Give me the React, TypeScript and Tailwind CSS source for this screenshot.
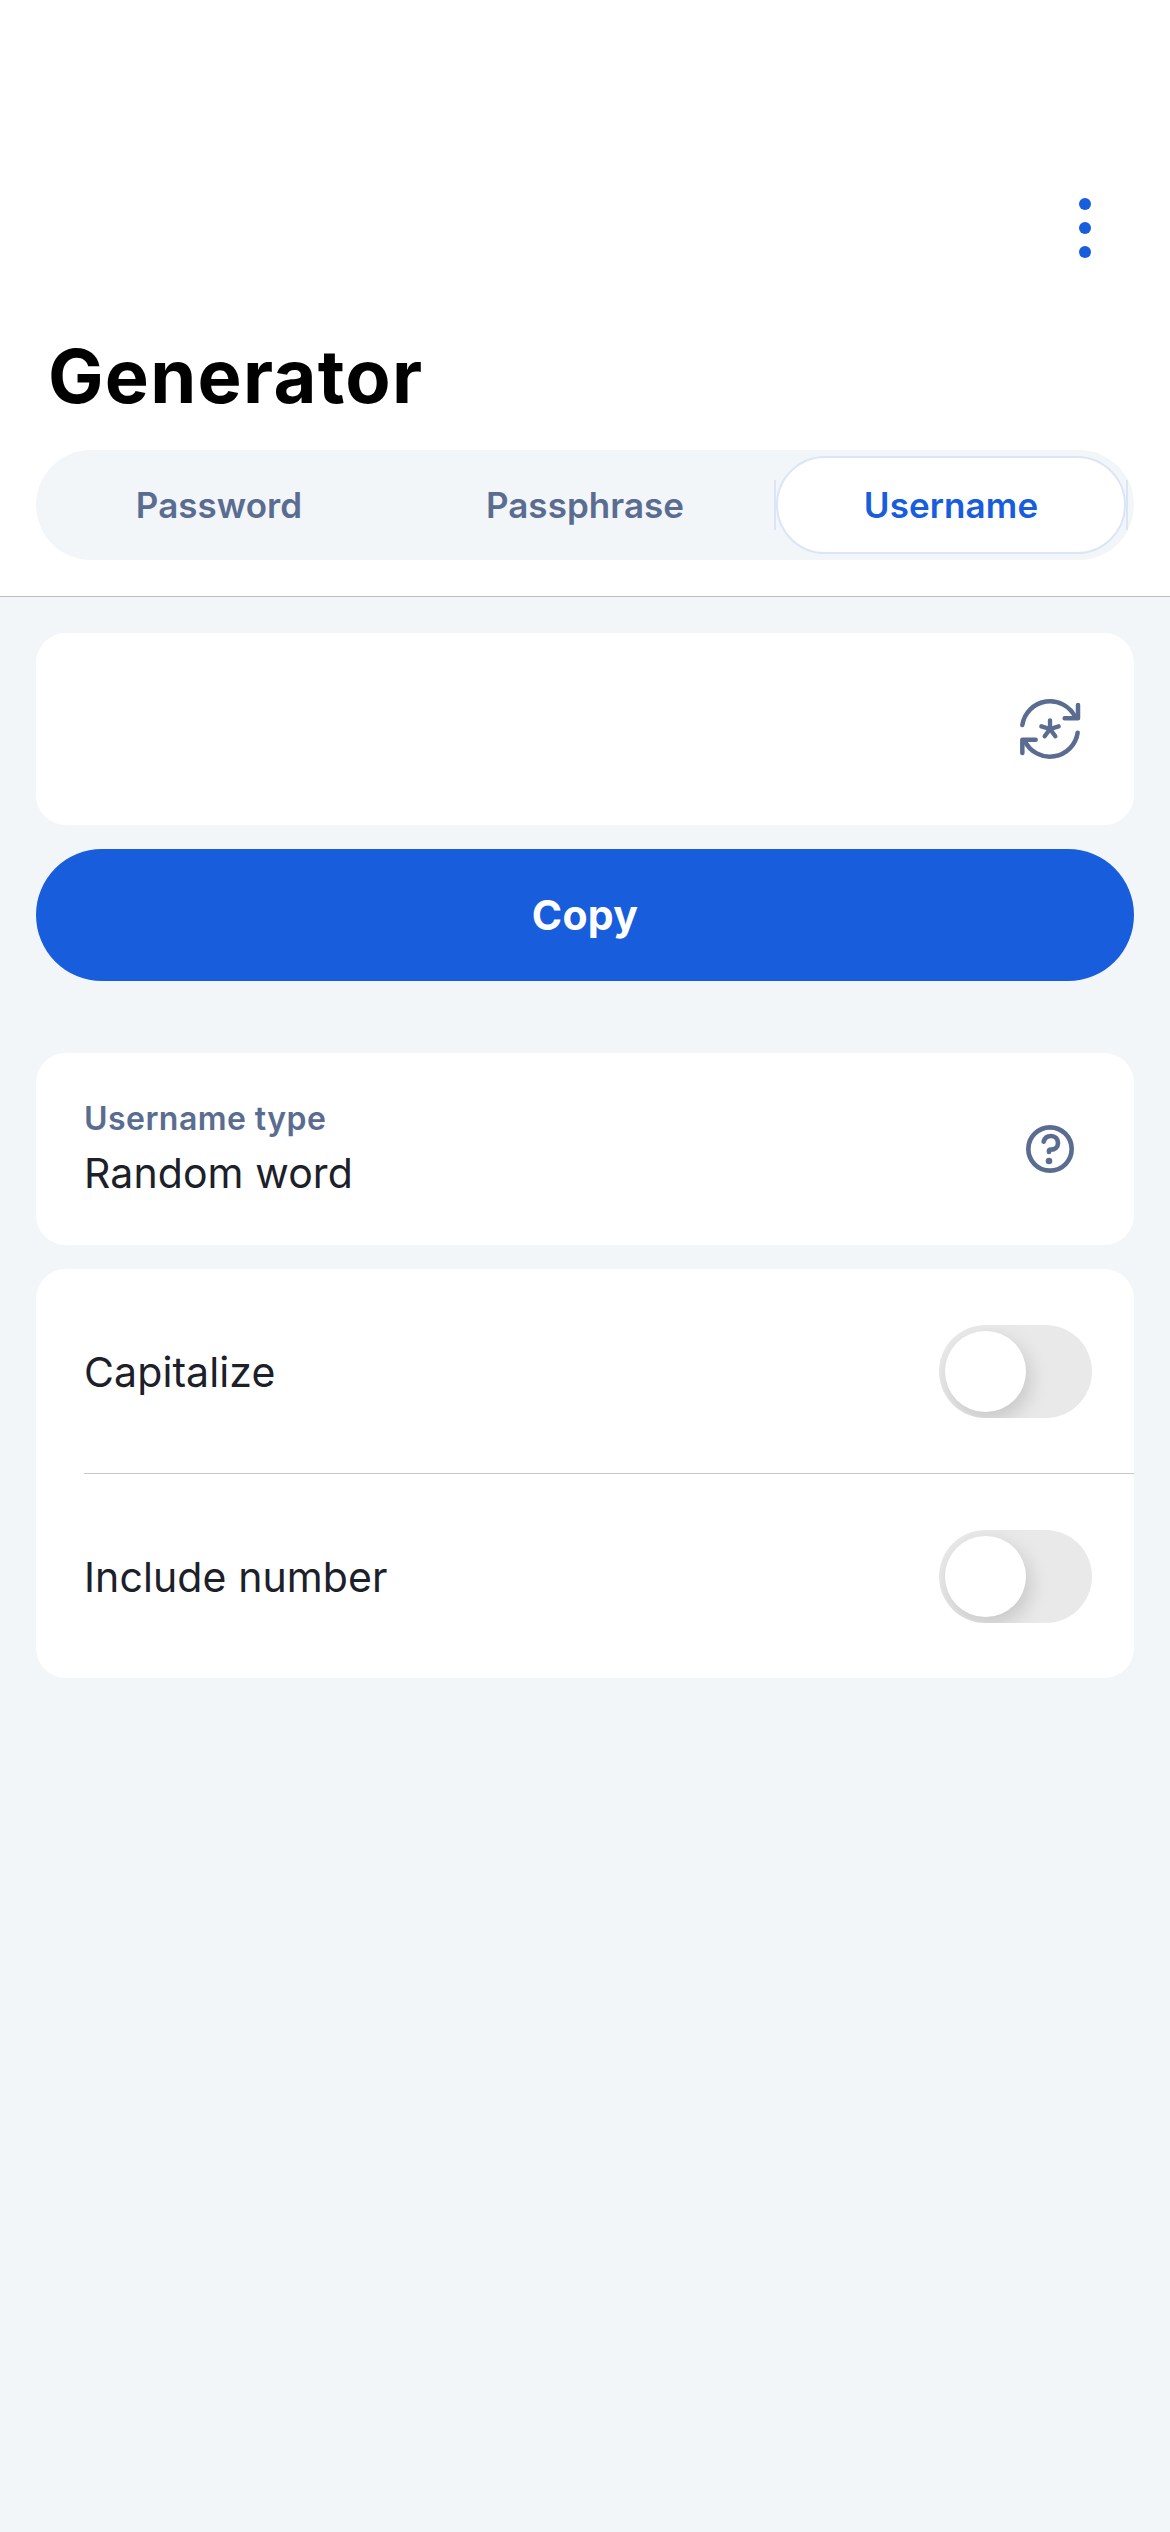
const segmentText = "flex h-full w-[366px] items-center justify-center font-semibold text-[35px] leading-none tracking-[0.05px]";

function RefreshIcon() {
  return (
    <svg className="size-[72px]" viewBox="42 39 216 216" fill="none" stroke="#5a6d91" strokeLinecap="round" strokeLinejoin="round">
      <g strokeWidth="13.5">
        <path d="M67 135A84 84 0 0 1 226 112" />
        <path d="M234 75V115H194" />
        <path d="M233 158A84 84 0 0 1 74 182" />
        <path d="M67 219V179H107" />
      </g>
      <path strokeWidth="13" d="M150 147V121M150 147L176 139M150 147L166 169M150 147L134 169M150 147L124 139" />
    </svg>
  );
}

function HelpIcon() {
  return (
    <svg className="size-[72px]" viewBox="42 39 216 216" fill="none" stroke="#5a6d91" strokeLinecap="round" strokeLinejoin="round">
      <circle cx="150" cy="147" r="65" strokeWidth="14" />
      <path strokeWidth="14" d="M131 125C134 113 142 108 153 108C165 108 174 117 174 129C174 142 164 149 153 149C149 149 147 150 147 153V156" />
      <circle cx="147" cy="183" r="10" fill="#5a6d91" stroke="none" />
    </svg>
  );
}

function Toggle() {
  return (
    <div role="switch" aria-checked="false" className="h-[93px] w-[153px] overflow-hidden rounded-full bg-[#e9e9e9] p-[6px]">
      <div className="size-[81px] rounded-full bg-white shadow-[4px_8px_20px_rgba(0,0,0,0.15)]" />
    </div>
  );
}

export default function App() {
  return (
    <div className="flex h-[2532px] w-[1170px] flex-col bg-[#f3f6f9] font-['Inter',sans-serif] text-[#1b2029]">
      <header className="flex h-[597px] flex-col border-b border-[#b9bfc6] bg-white px-[36px]">
        <div className="mt-[192px] flex justify-end pr-[37px]">
          <button aria-label="More" className="flex w-6 flex-col items-center gap-3 py-[6px]">
            <span className="size-3 rounded-full bg-[#175ddc]" />
            <span className="size-3 rounded-full bg-[#175ddc]" />
            <span className="size-3 rounded-full bg-[#175ddc]" />
          </button>
        </div>
        <h1 className="mt-[67px] flex h-[90px] items-center pl-[12px] text-[74px] font-bold leading-none tracking-[1.3px] text-black">Generator</h1>
        <div className="mt-[29px] flex h-[110px] items-center rounded-full bg-[#f3f6f9]">
          <div className={`${segmentText} text-[#5a6d91]`}>Password</div>
          <div className={`${segmentText} text-[#5a6d91]`}>Passphrase</div>
          <div className="relative mx-[6px] flex h-[98px] w-[354px] items-center justify-center px-[2px] text-[35px] font-semibold leading-none tracking-[0.1px] text-[#175ddc]">
            <span className="absolute left-0 top-[24px] h-[50px] w-[2px] bg-[#dce5f7]" />
            <span className="absolute right-0 top-[24px] h-[50px] w-[2px] bg-[#dce5f7]" />
            <div className="flex h-full w-full items-center justify-center rounded-full border-2 border-[#dce5f7] bg-white">Username</div>
          </div>
        </div>
      </header>

      <main className="flex flex-col px-[36px] pt-[36px]">
        <section className="flex h-[192px] items-center justify-end rounded-[30px] bg-white pr-[48px]">
          <RefreshIcon />
        </section>
        <button className="mt-[24px] flex h-[132px] items-center justify-center rounded-full bg-[#175ddc] text-[41px] font-bold leading-none tracking-[0.3px] text-white">Copy</button>

        <section className="mt-[72px] flex h-[192px] items-center justify-between rounded-[30px] bg-white px-[48px]">
          <div className="flex flex-col">
            <span className="text-[32px] font-semibold leading-[42px] tracking-[0.45px] text-[#5a6d91]">Username type</span>
            <span className="mt-[6px] text-[41px] leading-[54px] tracking-[0.1px]">Random word</span>
          </div>
          <HelpIcon />
        </section>

        <section className="mt-[24px] flex flex-col rounded-[30px] bg-white pl-[48px]">
          <div className="flex h-[205px] items-center justify-between border-b border-[#c6c6c8] pr-[42px] text-[41px] tracking-[0.1px]">
            <span className="pt-[3px]">Capitalize</span>
            <Toggle />
          </div>
          <div className="flex h-[204px] items-center justify-between pr-[42px] text-[41px] tracking-[0.1px]">
            <span className="pt-[3px]">Include number</span>
            <Toggle />
          </div>
        </section>
      </main>
    </div>
  );
}
